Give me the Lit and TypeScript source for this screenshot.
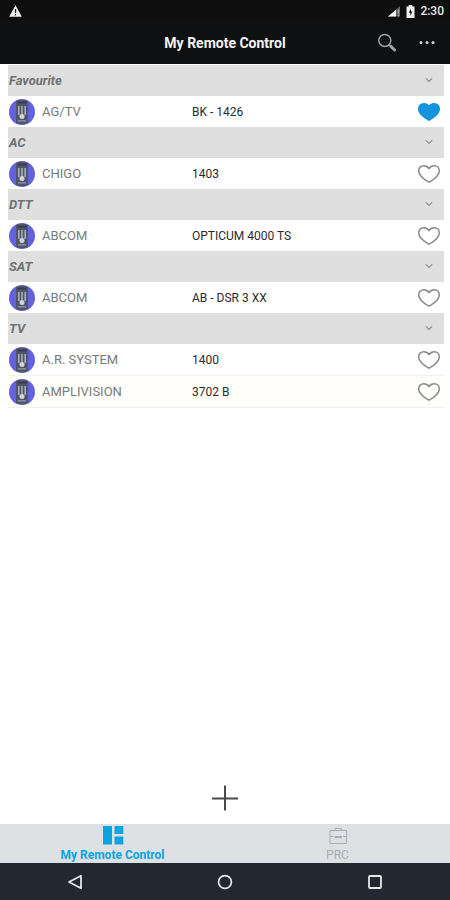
import { LitElement, html, css, svg } from "lit";
import { customElement, property, state } from "lit/decorators.js";
import { classMap } from "lit/directives/class-map.js";

interface Remote {
  brand: string;
  model: string;
  favourite?: boolean;
}

interface Group {
  title: string;
  remotes: Remote[];
}

const GROUPS: Group[] = [
  { title: "Favourite", remotes: [{ brand: "AG/TV", model: "BK - 1426", favourite: true }] },
  { title: "AC", remotes: [{ brand: "CHIGO", model: "1403" }] },
  { title: "DTT", remotes: [{ brand: "ABCOM", model: "OPTICUM 4000 TS" }] },
  { title: "SAT", remotes: [{ brand: "ABCOM", model: "AB - DSR 3 XX" }] },
  {
    title: "TV",
    remotes: [
      { brand: "A.R. SYSTEM", model: "1400" },
      { brand: "AMPLIVISION", model: "3702 B" },
    ],
  },
];

const reset = css`
  * {
    box-sizing: border-box;
  }
  button {
    margin: 0;
    padding: 0;
    border: 0;
    background: none;
    color: inherit;
    font: inherit;
    cursor: pointer;
  }
  svg {
    display: block;
    flex: none;
  }
`;

@customElement("remote-row")
export class RemoteRow extends LitElement {
  @property() brand = "";
  @property() model = "";
  @property({ type: Boolean }) favourite = false;

  static styles = [
    reset,
    css`
      :host {
        display: grid;
        grid-template-columns: 33px 150px 1fr 26px;
        align-items: center;
        height: 31px;
        padding: 0 2px 0 1px;
      }
      .brand {
        font-size: 13px;
        color: #777a7c;
      }
      .model {
        font-size: 12px;
        color: #2b2b2b;
      }
      .heart {
        display: flex;
        justify-content: center;
        color: #8a8a8a;
      }
    `,
  ];

  render() {
    return html`
      <svg width="26" height="26" viewBox="0 0 26 26" aria-hidden="true">
        <circle cx="13" cy="13" r="13" fill="#6461de" />
        <path d="M7 2Q13-.5 19 2V24Q13 26.5 7 24Z" fill="#50566a" />
        <path d="M8.5 3.5H17.5" stroke="#383d50" stroke-width="2" />
        <path d="M9.8 7V16M13 7V16M16.2 7V16" stroke="#a3a8b4" stroke-width="1.7" />
        <circle cx="13" cy="17.6" r="2.5" fill="#d0d4dc" />
        <path d="M9 21.8H17" stroke="#858b9c" stroke-width="1.6" />
      </svg>
      <span class="brand">${this.brand}</span>
      <span class="model">${this.model}</span>
      <button
        class="heart"
        aria-label="Favourite ${this.brand}"
        aria-pressed=${this.favourite ? "true" : "false"}
        @click=${() => (this.favourite = !this.favourite)}
      >
        <svg width="24" height="20" viewBox="0 0 24 20" aria-hidden="true">
          <path
            d="M12 18.2C9.6 16.8 1.7 12.3 1.7 6.9C1.7 3.8 3.9 1.7 6.8 1.7C9.2 1.7 11 2.9 12 4.6C13 2.9 14.8 1.7 17.2 1.7C20.1 1.7 22.3 3.8 22.3 6.9C22.3 12.3 14.4 16.8 12 18.2Z"
            fill=${this.favourite ? "#1593dc" : "none"}
            stroke=${this.favourite ? "#1593dc" : "currentColor"}
            stroke-width="1.5"
            stroke-linejoin="round"
          />
        </svg>
      </button>
    `;
  }
}

@customElement("app-root")
export class AppRoot extends LitElement {
  @state() private closed = new Set<string>();
  @state() private tab = "My Remote Control";

  static styles = [
    reset,
    css`
      :host {
        display: flex;
        flex-direction: column;
        min-height: 100vh;
        background: #fff;
        font-family: Roboto, "Liberation Sans", sans-serif;
      }
      .status {
        display: flex;
        align-items: center;
        gap: 5px;
        height: 22px;
        padding: 0 6px 0 9px;
        background: #0f0f0f;
        color: #e8e8e8;
        font-size: 12px;
        font-weight: 500;
      }
      .spacer {
        flex: 1;
      }
      .bar {
        display: grid;
        grid-template-columns: 1fr auto 1fr;
        align-items: center;
        height: 42px;
        padding: 0 14px;
        background: #0f1011;
        color: #f4f4f4;
      }
      .title {
        grid-column: 2;
        margin: 0;
        font-size: 14px;
        font-weight: 700;
      }
      .actions {
        display: flex;
        align-items: center;
        justify-content: flex-end;
        gap: 21px;
      }
      .list {
        flex: 1;
        padding: 1px 6px 0 8px;
      }
      .heading {
        margin: 0;
      }
      .toggle {
        display: flex;
        align-items: center;
        justify-content: space-between;
        width: 100%;
        height: 31px;
        padding: 0 10px 0 1px;
        background: #dfdfdf;
        color: #6f7172;
        font-size: 13px;
        font-weight: 700;
        font-style: italic;
      }
      .last remote-row {
        height: 32px;
        border-bottom: 1px solid #f2f2ec;
      }
      .last remote-row:last-child {
        background: #fffefa;
      }
      .add {
        display: flex;
        justify-content: center;
        align-self: center;
        margin-bottom: 12px;
      }
      .tabs {
        display: grid;
        grid-template-columns: 1fr 1fr;
        height: 39px;
        background: #dee1e3;
      }
      .tab {
        display: flex;
        flex-direction: column;
        align-items: center;
        justify-content: space-between;
        padding-top: 2px;
        color: #a9adb3;
        font-size: 12px;
        line-height: 16px;
      }
      .active {
        color: #0ca4e0;
        font-weight: 700;
      }
      .system {
        display: grid;
        grid-template-columns: repeat(3, 1fr);
        height: 37px;
        background: #222831;
        color: #e6e7e9;
      }
      .key {
        display: flex;
        align-items: center;
        justify-content: center;
      }
    `,
  ];

  private toggle(title: string) {
    const next = new Set(this.closed);
    if (!next.delete(title)) next.add(title);
    this.closed = next;
  }

  private renderGroup(group: Group, index: number) {
    const open = !this.closed.has(group.title);
    return html`
      <section class=${classMap({ last: index === GROUPS.length - 1 })}>
        <h2 class="heading">
          <button class="toggle" aria-expanded=${open ? "true" : "false"} @click=${() => this.toggle(group.title)}>
            <span>${group.title}</span>
            <svg width="10" height="10" viewBox="0 0 10 10" aria-hidden="true">
              <path d="M1.8 2.4L5 5.4L8.2 2.4" fill="none" stroke="#8c8c8c" stroke-width="1.2" />
            </svg>
          </button>
        </h2>
        ${open
          ? group.remotes.map(
              (r) => html`<remote-row .brand=${r.brand} .model=${r.model} .favourite=${!!r.favourite}></remote-row>`
            )
          : null}
      </section>
    `;
  }

  private renderTab(label: string, icon: unknown) {
    const active = this.tab === label;
    return html`
      <button class=${classMap({ tab: true, active })} aria-pressed=${active ? "true" : "false"} @click=${() => (this.tab = label)}>
        <svg width="22" height="20" viewBox="0 0 22 20" aria-hidden="true">${icon}</svg>
        <span>${label}</span>
      </button>
    `;
  }

  render() {
    return html`
      <div class="status">
        <svg width="13" height="12" viewBox="0 0 13 12" aria-hidden="true">
          <path d="M6.5 .3L12.8 11.7H.2Z" fill="#f2f2f2" />
          <path d="M6.5 4V8M6.5 9V10.4" stroke="#111" stroke-width="1.3" />
        </svg>
        <span class="spacer"></span>
        <svg width="14" height="12" viewBox="0 0 14 12" aria-hidden="true">
          <path d="M1 11.5L13 1V11.5Z" fill="#606060" />
          <path d="M1 11.5L9 4.8V11.5Z" fill="#f2f2f2" />
          <path d="M11.5 4.5V8.5M11.5 9.8V11.5" stroke="#aaa" stroke-width="1.4" />
        </svg>
        <svg width="9" height="13" viewBox="0 0 9 13" aria-hidden="true">
          <path d="M.5 1.5H2.7V0H6.3V1.5H8.5V13H.5Z" fill="#f2f2f2" />
          <path d="M5 3.5L2.8 7.8H4.3V11L6.4 6.6H5Z" fill="#111" />
        </svg>
        <span>2:30</span>
      </div>
      <header class="bar">
        <h1 class="title">My Remote Control</h1>
        <div class="actions">
          <button aria-label="Search">
            <svg width="20" height="20" viewBox="0 0 20 20" fill="none" aria-hidden="true">
              <circle cx="7.8" cy="7.4" r="6" stroke="#a0a0a0" stroke-width="1.5" />
              <path d="M12.2 11.8L14 13.6" stroke="#a0a0a0" stroke-width="1.6" />
              <path d="M13.8 13.4L17.6 17" stroke="#a0a0a0" stroke-width="3" stroke-linecap="round" />
            </svg>
          </button>
          <button aria-label="More options">
            <svg width="18" height="6" viewBox="0 0 18 6" fill="#d0d0d0" aria-hidden="true">
              <circle cx="3" cy="2.6" r="1.5" />
              <circle cx="9" cy="2.6" r="1.5" />
              <circle cx="15" cy="2.6" r="1.5" />
            </svg>
          </button>
        </div>
      </header>
      <main class="list">${GROUPS.map((g, i) => this.renderGroup(g, i))}</main>
      <button class="add" aria-label="Add remote">
        <svg width="28" height="28" viewBox="0 0 28 28" aria-hidden="true">
          <path d="M14 1.5V26.5M1 14.5H27" stroke="#4a4a4a" stroke-width="2" />
        </svg>
      </button>
      <nav class="tabs">
        ${this.renderTab(
          "My Remote Control",
          svg`<path d="M1 0H10V18.5H1ZM12.5 0H21.3V8H12.5ZM12.5 10.5H21.3V18.5H12.5Z" fill="currentColor" />`
        )}
        ${this.renderTab(
          "PRC",
          svg`<g fill="none" stroke="currentColor">
            <path d="M3 4.5H19.5V17.5H3ZM8 4.5V2.5H14.5V4.5M3 10.5H6.5" />
            <path d="M16 10.5H19.5" />
            <path d="M7.5 11H15" stroke-width="2" />
          </g>`
        )}
      </nav>
      <div class="system">
        <button class="key" aria-label="Back">
          <svg width="16" height="16" viewBox="0 0 16 16" aria-hidden="true">
            <path d="M14 1.8V14.2L2 8Z" fill="none" stroke="currentColor" stroke-width="1.8" stroke-linejoin="round" />
          </svg>
        </button>
        <button class="key" aria-label="Home">
          <svg width="16" height="16" viewBox="0 0 16 16" aria-hidden="true">
            <circle cx="8" cy="8" r="6.4" fill="none" stroke="currentColor" stroke-width="1.7" />
          </svg>
        </button>
        <button class="key" aria-label="Recent apps">
          <svg width="16" height="16" viewBox="0 0 16 16" aria-hidden="true">
            <rect x="2" y="2" width="12" height="12" rx="1" fill="none" stroke="currentColor" stroke-width="1.8" />
          </svg>
        </button>
      </div>
    `;
  }
}
